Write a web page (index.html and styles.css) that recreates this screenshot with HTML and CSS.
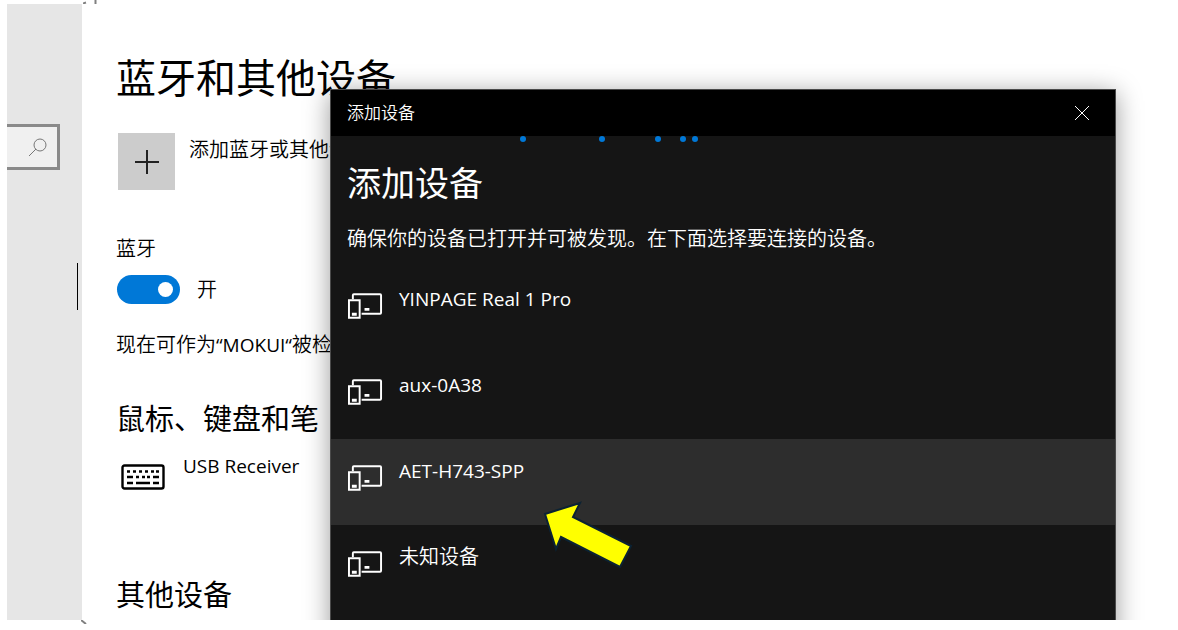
FILE: index.html
```html
<!DOCTYPE html>
<html lang="zh-CN">
<head>
  <meta charset="UTF-8">
  <meta name="viewport" content="width=device-width, initial-scale=1.0">
  <title>蓝牙和其他设备</title>
  <link rel="stylesheet" href="styles.css">
</head>
<body>
  <svg class="icon-defs" aria-hidden="true">
    <symbol id="devices" viewBox="0 0 36 28">
      <path d="M5 7V3Q5 2 6 2H33Q34 2 34 3V21Q34 22 33 22H14" fill="none" stroke="currentColor" stroke-width="2"/>
      <path d="M1 8H12V26H1Z" fill="none" stroke="currentColor" stroke-width="2"/>
      <path d="M4 21H9V24H4ZM17 16H22V19H17Z" fill="currentColor"/>
    </symbol>
  </svg>
  <svg class="mark mark-top" viewBox="0 0 16 4" aria-hidden="true">
    <path d="M0 3.5L3 2.5M12.5 0V4" stroke="#808080" stroke-width="2"/>
  </svg>
  <svg class="mark mark-bottom" viewBox="0 0 6 4" aria-hidden="true">
    <path d="M0 0L5 4" stroke="#808080" stroke-width="2"/>
  </svg>
  <div class="screen">
    <aside class="sidebar">
      <div class="search">
        <input type="text" aria-label="查找设置">
        <svg viewBox="0 0 20 20" aria-hidden="true">
          <circle cx="13" cy="8" r="6"/>
          <path d="M9 12L2 19"/>
        </svg>
      </div>
      <span class="scroll-thumb"></span>
    </aside>
    <main class="settings">
      <h1>蓝牙和其他设备</h1>
      <div class="add-row">
        <button class="add-button" id="add" aria-label="添加">
          <svg viewBox="0 0 24 24" aria-hidden="true"><path d="M12 0V24M0 12H24"/></svg>
        </button>
        <label for="add">添加蓝牙或其他设备</label>
      </div>
      <label class="field-label" for="bluetooth">蓝牙</label>
      <div class="toggle-row">
        <input class="toggle" type="checkbox" id="bluetooth" checked>
        <span>开</span>
      </div>
      <p class="status">现在可作为<span class="latin">“MOKUI“</span>被检测到</p>
      <h2>鼠标、键盘和笔</h2>
      <div class="device-row">
        <svg class="keyboard" viewBox="0 0 44 28" aria-hidden="true">
          <rect x="1.5" y="2.5" width="41" height="23" rx="2" fill="none" stroke="#000" stroke-width="2.4"/>
          <path d="M6 8.5H9M12 8.5H15M18 8.5H21M24 8.5H27M30 8.5H33M35 8.5H38M6 14H12M15 14H18M21 14H24M26 14H29M32 14H38M6 20H12M15 20H29M32 20H38" stroke="#000" stroke-width="2.6"/>
        </svg>
        <span class="latin">USB Receiver</span>
      </div>
      <h2 class="other">其他设备</h2>
    </main>
    <section class="dialog" role="dialog" aria-labelledby="dialog-title">
      <header class="titlebar">
        <span>添加设备</span>
        <button class="close" aria-label="关闭">
          <svg viewBox="0 0 16 16" aria-hidden="true"><path d="M1 1L15 15M15 1L1 15"/></svg>
        </button>
      </header>
      <svg class="progress" viewBox="0 0 784 6" aria-hidden="true">
        <circle cx="192" cy="3" r="3"/>
        <circle cx="271" cy="3" r="3"/>
        <circle cx="327" cy="3" r="3"/>
        <circle cx="352" cy="3" r="3"/>
        <circle cx="364" cy="3" r="3"/>
      </svg>
      <h2 id="dialog-title">添加设备</h2>
      <p>确保你的设备已打开并可被发现。在下面选择要连接的设备。</p>
      <ul class="devices">
        <li><button><svg aria-hidden="true"><use href="#devices"/></svg><span class="latin">YINPAGE Real 1 Pro</span></button></li>
        <li><button><svg aria-hidden="true"><use href="#devices"/></svg><span class="latin">aux-0A38</span></button></li>
        <li><button class="selected"><svg aria-hidden="true"><use href="#devices"/></svg><span class="latin">AET-H743-SPP</span></button></li>
        <li><button><svg aria-hidden="true"><use href="#devices"/></svg><span>未知设备</span></button></li>
      </ul>
      <svg class="arrow" viewBox="0 0 90 68" aria-hidden="true">
        <path d="M2 13L37 2L30 16L88 45L77 66L18 36L13 48Z"/>
      </svg>
    </section>
  </div>
</body>
</html>
```
FILE: styles.css
```css
* {
  box-sizing: border-box;
}

body {
  margin: 0;
  background: #fff;
  color: #000;
  font-family: "Open Sans", "Noto Sans CJK SC", sans-serif;
  font-size: 20px;
  font-weight: 350;
  line-height: 28px;
}

h1, h2, p, ul {
  margin: 0;
  padding: 0;
}

h1, h2 {
  font-weight: 400;
}

button {
  border: none;
  padding: 0;
  background: none;
  color: inherit;
  font: inherit;
  cursor: pointer;
}

svg {
  display: block;
  flex: none;
}

/* Open Sans runs larger than the CJK face beside it */
.latin {
  font-size: 19px;
  font-weight: 400;
}

.icon-defs {
  position: absolute;
  width: 0;
  height: 0;
}

.mark {
  position: absolute;
  height: 4px;
}

.mark-top {
  top: 0;
  left: 83px;
  width: 16px;
}

.mark-bottom {
  bottom: 6px;
  left: 81px;
  width: 6px;
}

.screen {
  position: relative;
  display: grid;
  grid-template-columns: 75px 1fr;
  height: calc(100vh - 14px);
  margin: 4px 0 10px 7px;
  overflow: hidden;
}

/* sidebar */
.sidebar {
  position: relative;
  padding-top: 120px;
  background: #e6e6e6;
}

.search {
  display: flex;
  align-items: center;
  width: 53px;
  height: 46px;
  padding-right: 10px;
  border: 3px solid #8a8a8a;
  border-left: none;
  background: #f0f0f0;
}

.search input {
  flex: 1;
  min-width: 0;
  border: none;
  background: none;
  outline: none;
}

.search svg {
  width: 20px;
  height: 20px;
  fill: none;
  stroke: #777;
}

.scroll-thumb {
  position: absolute;
  top: 259px;
  right: 4px;
  width: 1px;
  height: 47px;
  background: #000;
}

/* settings page */
.settings {
  padding: 50px 0 0 34px;
  white-space: nowrap;
}

h1 {
  font-size: 40px;
  line-height: 48px;
}

.add-row {
  display: flex;
  gap: 14px;
  margin-top: 31px;
  padding-left: 2px;
}

.add-row label {
  padding-top: 3px;
}

.add-button {
  display: flex;
  align-items: center;
  justify-content: center;
  width: 57px;
  height: 57px;
  background: #ccc;
}

.add-button svg {
  width: 24px;
  height: 24px;
  stroke: #222;
  stroke-width: 2;
}

.field-label {
  display: block;
  margin-top: 45px;
}

.toggle-row {
  display: flex;
  align-items: center;
  gap: 17px;
  margin-top: 12px;
  padding-left: 1px;
}

.toggle {
  appearance: none;
  display: flex;
  align-items: center;
  justify-content: flex-end;
  width: 63px;
  height: 29px;
  margin: 0;
  padding: 0 7px;
  border-radius: 15px;
  background: #0078d7;
}

.toggle::before {
  content: "";
  width: 15px;
  height: 15px;
  border-radius: 50%;
  background: #fff;
}

.toggle:not(:checked) {
  justify-content: flex-start;
  background: #8a8a8a;
}

.status {
  margin-top: 27px;
}

.settings h2 {
  margin-top: 42px;
  font-size: 29px;
  line-height: 36px;
}

.device-row {
  display: flex;
  gap: 18px;
  margin-top: 15px;
  padding-left: 5px;
}

.keyboard {
  width: 44px;
  height: 28px;
  margin-top: 11px;
}

.settings .other {
  margin-top: 86px;
}

/* add device window */
.dialog {
  position: absolute;
  top: 85px;
  left: 323px;
  right: 62px;
  padding-bottom: 40px;
  border: 1px solid #4a4a4a;
  background: #151515;
  color: #fff;
  box-shadow: 0 4px 24px rgba(0, 0, 0, 0.4);
}

.titlebar {
  display: flex;
  align-items: center;
  justify-content: space-between;
  height: 46px;
  padding-left: 16px;
  background: #000;
  font-size: 17px;
}

.close {
  display: flex;
  align-items: center;
  justify-content: center;
  width: 66px;
  height: 46px;
}

.close svg {
  width: 16px;
  height: 16px;
  stroke: #fff;
}

.progress {
  width: 100%;
  height: 6px;
  fill: #0078d7;
}

.dialog h2 {
  margin-top: 19px;
  padding-left: 16px;
  font-size: 34px;
  line-height: 44px;
}

.dialog p {
  margin-top: 20px;
  padding-left: 16px;
}

.devices {
  margin-top: 14px;
  list-style: none;
}

.devices button {
  display: flex;
  align-items: flex-start;
  gap: 16px;
  width: 100%;
  height: 86px;
  padding: 18px 17px;
  text-align: left;
}

.devices .selected {
  background: #2d2d2d;
}

.devices svg {
  width: 35px;
  height: 28px;
  margin-top: 7px;
}

.arrow {
  position: absolute;
  top: 411px;
  left: 212px;
  width: 90px;
  height: 68px;
  fill: #ff0;
  stroke: #0b2233;
  stroke-width: 2;
}
```
